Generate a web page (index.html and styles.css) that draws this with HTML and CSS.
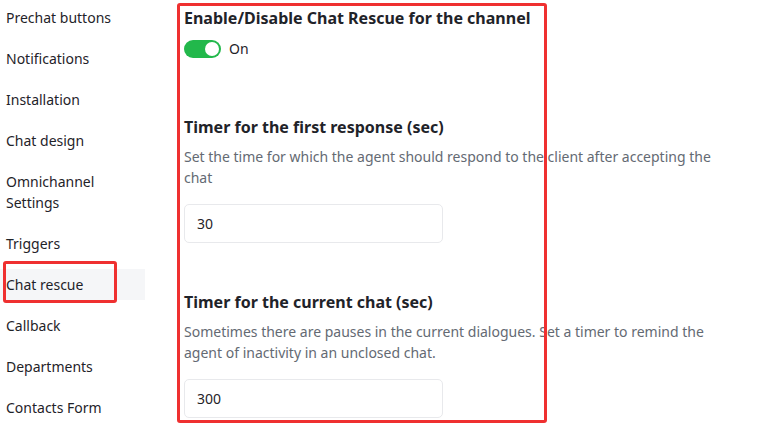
FILE: index.html
```html
<!DOCTYPE html>
<html lang="en">
<head>
<meta charset="utf-8">
<title>Chat rescue</title>
<link rel="stylesheet" href="styles.css">
</head>
<body>
<div class="page">
  <nav class="sidebar">
    <div class="nav-item">Prechat buttons</div>
    <div class="nav-item">Notifications</div>
    <div class="nav-item">Installation</div>
    <div class="nav-item">Chat design</div>
    <div class="nav-item">Omnichannel<br>Settings</div>
    <div class="nav-item">Triggers</div>
    <div class="nav-item active">Chat rescue</div>
    <div class="nav-item">Callback</div>
    <div class="nav-item">Departments</div>
    <div class="nav-item">Contacts Form</div>
  </nav>
  <main class="main">
    <h2 class="title">Enable/Disable Chat Rescue for the channel</h2>
    <div class="switch-row">
      <span class="switch"><span class="knob"></span></span>
      <span class="switch-label">On</span>
    </div>

    <h3 class="heading first">Timer for the first response (sec)</h3>
    <p class="desc">Set the time for which the agent should respond to the client after accepting the chat</p>
    <div class="input">30</div>

    <h3 class="heading second">Timer for the current chat (sec)</h3>
    <p class="desc">Sometimes there are pauses in the current dialogues. Set a timer to remind the agent of inactivity in an unclosed chat.</p>
    <div class="input">300</div>
  </main>
</div>
<div class="mark mark-nav"></div>
<div class="mark mark-main"></div>
</body>
</html>
```

FILE: styles.css
```css
* { box-sizing: border-box; }
html, body { margin: 0; padding: 0; background: #fff; }
body {
  width: 762px;
  height: 428px;
  overflow: hidden;
  font-family: "Noto Sans", "Open Sans", sans-serif;
  color: #1f2329;
  position: relative;
}
.page {
  display: flex;
}
.sidebar {
  width: 145px;
  flex: none;
  padding-top: 2px;
  display: flex;
  flex-direction: column;
  gap: 10px;
}
.nav-item {
  font-size: 14px;
  line-height: 21px;
  padding: 5px 6px;
  color: #1f2329;
}
.nav-item.active { background: #f5f6f8; }
.main {
  padding-left: 39px;
  padding-top: 6px;
  width: 600px;
}
.title {
  margin: 0;
  font-size: 16px;
  line-height: 24px;
  font-weight: 700;
  color: #1f2329;
}
.switch-row {
  margin-top: 10px;
  display: flex;
  align-items: center;
  gap: 8px;
  height: 18px;
}
.switch {
  width: 37px;
  height: 18px;
  border-radius: 9px;
  background: #22b84b;
  display: flex;
  align-items: center;
  justify-content: flex-end;
  padding-right: 2px;
}
.knob {
  width: 14px;
  height: 14px;
  border-radius: 50%;
  background: #fff;
}
.switch-label { font-size: 14px; line-height: 18px; }
.heading {
  margin: 0;
  font-size: 16px;
  line-height: 24px;
  font-weight: 700;
  color: #1f2329;
}
.heading.first { margin-top: 57px; }
.heading.second { margin-top: 47px; }
.desc {
  margin: 7px 0 0;
  font-size: 14px;
  line-height: 21px;
  color: #646a73;
  width: 540px;
}
.input {
  margin-top: 16px;
  width: 259px;
  height: 39px;
  border: 1px solid #e8e9ec;
  border-radius: 5px;
  padding-left: 12px;
  font-size: 14px;
  line-height: 37px;
  color: #1f2329;
}
.mark {
  position: absolute;
  border: 3px solid #ef3030;
  border-radius: 3px;
  pointer-events: none;
}
.mark-nav { left: 3px; top: 261px; width: 114px; height: 42px; }
.mark-main { left: 177px; top: 3px; width: 370px; height: 420px; }
```
